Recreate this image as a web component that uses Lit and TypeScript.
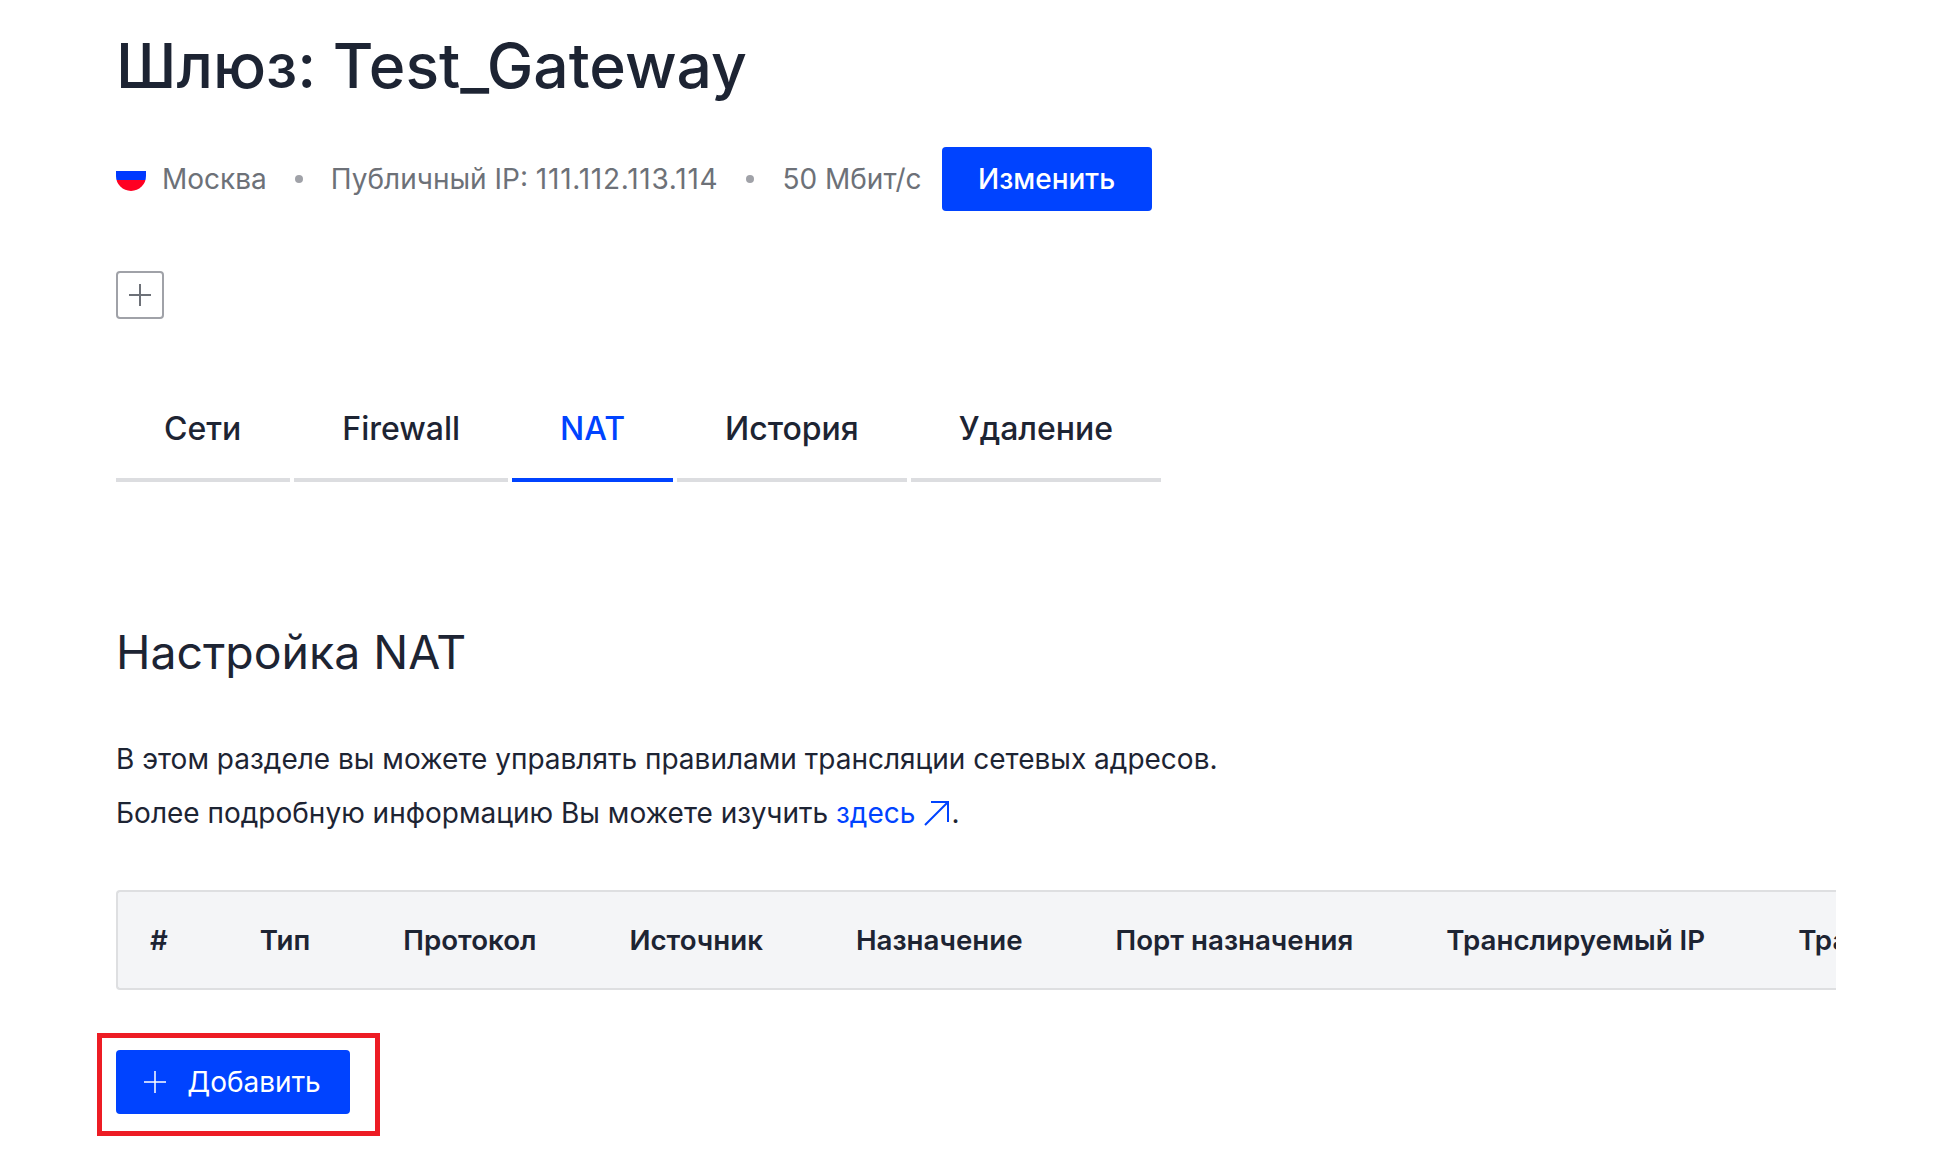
import { LitElement, html, css } from 'lit'
import { customElement } from 'lit/decorators.js'

const tabs = ['Сети', 'Firewall', 'NAT', 'История', 'Удаление']
const columns = ['#', 'Тип', 'Протокол', 'Источник', 'Назначение', 'Порт назначения', 'Транслируемый IP', 'Транслируемый порт']

@customElement('app-root')
export class AppRoot extends LitElement {
	static styles = css`
		:host {
			display: block;
			height: 1174px;
			overflow: hidden;
			background: #fff;
			color: #1d2433;
			font-family: Inter, 'Noto Sans', sans-serif;
			font-size: 28px;
		}

		.page {
			width: 1720px;
			margin-left: 116px;
			padding-top: 26px;
		}

		h1 {
			margin: 0;
			font-size: 62.4px;
			line-height: 80px;
			font-weight: 500;
		}

		.meta {
			display: flex;
			align-items: center;
			height: 64px;
			margin-top: 41px;
			color: #6d7178;
			line-height: 40px;
		}

		.flag {
			width: 30px;
			height: 20px;
			margin: 4px 16px 0 0;
			border-radius: 0 0 15px 15px;
			background: linear-gradient(#0039ff 45%, #ff0022 45%);
		}

		.dot {
			width: 8px;
			height: 8px;
			margin: 0 28px;
			border-radius: 50%;
			background: #a0a2a8;
		}

		.digits {
			letter-spacing: 0.75px;
		}

		.btn {
			display: inline-flex;
			align-items: center;
			justify-content: center;
			height: 64px;
			border: 0;
			border-radius: 4px;
			background: #0043ff;
			color: #fff;
			font: 500 28px Inter, sans-serif;
		}

		.edit {
			width: 210px;
			margin-left: 20px;
		}

		.square {
			display: flex;
			align-items: center;
			justify-content: center;
			box-sizing: border-box;
			width: 48px;
			height: 48px;
			margin-top: 60px;
			border: 2px solid #a0a2a8;
			border-radius: 4px;
			color: #6d7178;
		}

		.tabs {
			display: flex;
			gap: 4px;
			width: fit-content;
			margin-top: 76px;
		}

		.tab {
			padding: 0 48px;
			height: 83px;
			line-height: 68px;
			border-bottom: 4px solid #dcdde0;
			font-weight: 500;
			font-size: 32px;
		}

		.tab:first-child {
			padding-right: 49px;
		}

		.tab.active {
			color: #0043ff;
			border-bottom-color: #0043ff;
		}

		h2 {
			margin: 138px 0 0;
			font-size: 46.4px;
			line-height: 64px;
			font-weight: 400;
		}

		p {
			margin: 0;
			line-height: 54px;
			font-size: 28px;
		}

		.intro {
			margin-top: 48px;
		}

		a {
			color: #0043ff;
			text-decoration: none;
		}

		a svg {
			margin-left: 8px;
			vertical-align: -3px;
		}

		.table {
			display: flex;
			gap: 93px;
			box-sizing: border-box;
			height: 100px;
			margin-top: 50px;
			padding-left: 32px;
			align-items: center;
			overflow: hidden;
			white-space: nowrap;
			background: #f4f5f7;
			border: solid #dedfe1;
			border-width: 2px 0 2px 2px;
			border-radius: 4px 0 0 4px;
			font-weight: 600;
			font-size: 27.7px;
		}

		.table span:first-child {
			margin-right: -1px;
		}

		.marked {
			display: inline-block;
			margin: 43px 0 0 -19px;
			padding: 12px 25px 17px 14px;
			border: 5px solid #ed1c24;
		}

		.add {
			width: 234px;
			gap: 20px;
			padding: 0 2px 0 0;
			font-weight: 400;
		}
	`

	render() {
		return html`
			<div class="page">
				<h1>Шлюз: Test_Gateway</h1>
				<div class="meta">
					<span class="flag"></span>
					<span>Москва</span>
					<span class="dot"></span>
					<span>Публичный IP: <span class="digits">111.112.113.114</span></span>
					<span class="dot"></span>
					<span>50 Мбит/с</span>
					<button class="btn edit">Изменить</button>
				</div>
				<div class="square">
					<svg width="24" height="24" viewBox="0 0 24 24" fill="none" stroke="currentColor" stroke-width="2">
						<path d="M12 1v22M1 12h22" />
					</svg>
				</div>
				<div class="tabs">
					${tabs.map((t) => html`<div class="tab ${t === 'NAT' ? 'active' : ''}">${t}</div>`)}
				</div>
				<h2>Настройка NAT</h2>
				<div class="intro">
					<p>В этом разделе вы можете управлять правилами трансляции сетевых адресов.</p>
					<p>
						Более подробную информацию Вы можете изучить
						<a href="#">здесь<svg width="28" height="26" viewBox="0 0 28 26" fill="none" stroke="currentColor" stroke-width="2"><path d="M2 25 25 2M8 2h17v20" /></svg></a>.
					</p>
				</div>
				<div class="table">
					${columns.map((c) => html`<span>${c}</span>`)}
				</div>
				<div class="marked">
					<button class="btn add">
						<svg width="24" height="24" viewBox="0 0 24 24" fill="none" stroke="currentColor" stroke-width="1.5">
							<path d="M12 1v22M1 12h22" />
						</svg>
						Добавить
					</button>
				</div>
			</div>
		`
	}
}
